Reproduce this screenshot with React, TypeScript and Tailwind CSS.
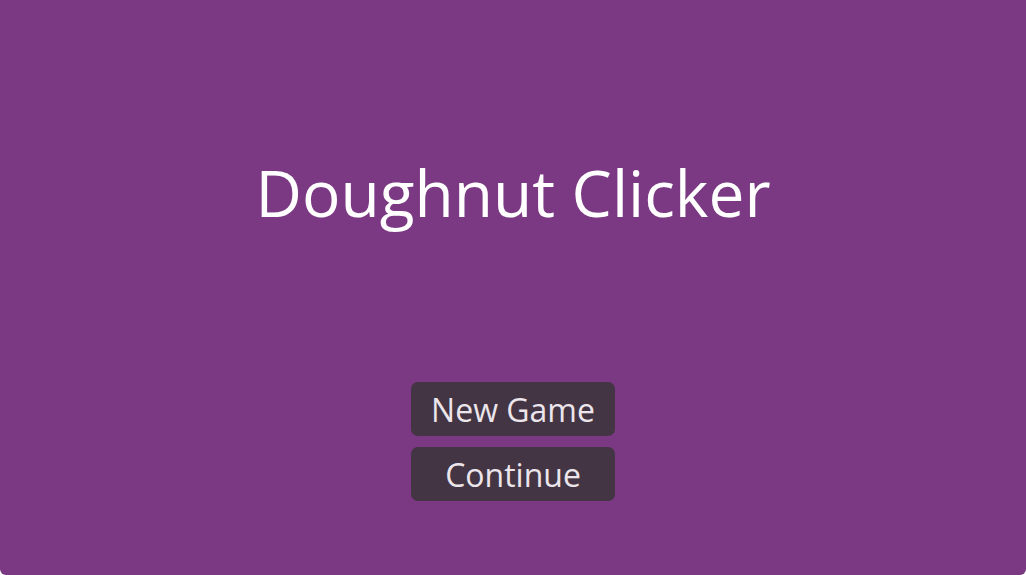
export default function App() {
  return (
    <div
      className="w-[1026px] h-[575px] bg-[#7a3982] flex flex-col items-center text-white rounded-b-[6px] overflow-hidden"
      style={{ fontFamily: '"Open Sans", "Noto Sans", sans-serif' }}
    >
      <h1 className="mt-[161px] text-[64px] leading-[64px] text-[#ffffff] font-normal">Doughnut Clicker</h1>
      <div className="mt-[157px] flex flex-col gap-[11px]">
        <button className="w-[204px] h-[54px] pt-[2px] rounded-[7px] bg-[#433543] text-[32px] leading-none text-[#ece6ec] flex items-center justify-center">
          New Game
        </button>
        <button className="w-[204px] h-[54px] pt-[2px] rounded-[7px] bg-[#433543] text-[32px] leading-none text-[#ece6ec] flex items-center justify-center">
          Continue
        </button>
      </div>
    </div>
  );
}
